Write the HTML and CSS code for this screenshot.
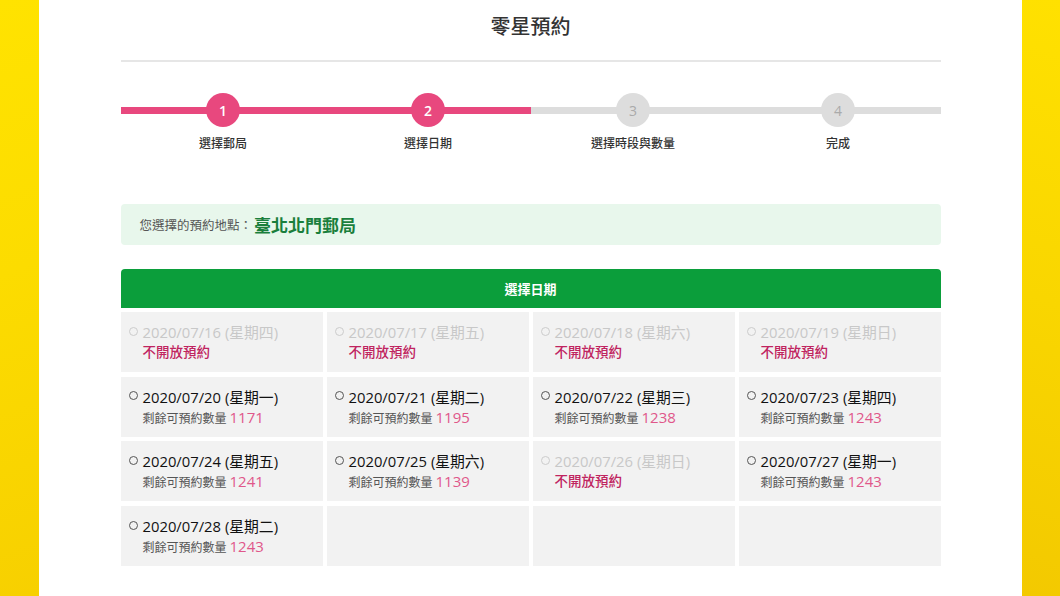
FILE: index.html
```html
<!DOCTYPE html>
<html lang="zh-Hant">
<head>
<meta charset="utf-8">
<link rel="stylesheet" href="styles.css">
</head>
<body>
<div class="page">
  <div class="side side-left"></div>
  <main class="main">
    <div class="container">
      <h1 class="title">零星預約</h1>
      <div class="steps">
        <div class="step done"><div class="track"><span class="dot">1</span></div><div class="label">選擇郵局</div></div>
        <div class="step done half"><div class="track"><span class="dot">2</span></div><div class="label">選擇日期</div></div>
        <div class="step"><div class="track"><span class="dot">3</span></div><div class="label">選擇時段與數量</div></div>
        <div class="step"><div class="track"><span class="dot">4</span></div><div class="label">完成</div></div>
      </div>
      <div class="location"><span class="loc-label">您選擇的預約地點：</span><span class="loc-name">臺北北門郵局</span></div>
      <div class="panel-head">選擇日期</div>
      <div class="grid">
        <div class="cell off"><div class="date"><span class="radio"></span>2020/07/16 (星期四)</div><div class="closed">不開放預約</div></div>
        <div class="cell off"><div class="date"><span class="radio"></span>2020/07/17 (星期五)</div><div class="closed">不開放預約</div></div>
        <div class="cell off"><div class="date"><span class="radio"></span>2020/07/18 (星期六)</div><div class="closed">不開放預約</div></div>
        <div class="cell off"><div class="date"><span class="radio"></span>2020/07/19 (星期日)</div><div class="closed">不開放預約</div></div>
        <div class="cell"><div class="date"><span class="radio"></span>2020/07/20 (星期一)</div><div class="left">剩餘可預約數量<span class="num">1171</span></div></div>
        <div class="cell"><div class="date"><span class="radio"></span>2020/07/21 (星期二)</div><div class="left">剩餘可預約數量<span class="num">1195</span></div></div>
        <div class="cell"><div class="date"><span class="radio"></span>2020/07/22 (星期三)</div><div class="left">剩餘可預約數量<span class="num">1238</span></div></div>
        <div class="cell"><div class="date"><span class="radio"></span>2020/07/23 (星期四)</div><div class="left">剩餘可預約數量<span class="num">1243</span></div></div>
        <div class="cell"><div class="date"><span class="radio"></span>2020/07/24 (星期五)</div><div class="left">剩餘可預約數量<span class="num">1241</span></div></div>
        <div class="cell"><div class="date"><span class="radio"></span>2020/07/25 (星期六)</div><div class="left">剩餘可預約數量<span class="num">1139</span></div></div>
        <div class="cell off"><div class="date"><span class="radio"></span>2020/07/26 (星期日)</div><div class="closed">不開放預約</div></div>
        <div class="cell"><div class="date"><span class="radio"></span>2020/07/27 (星期一)</div><div class="left">剩餘可預約數量<span class="num">1243</span></div></div>
        <div class="cell"><div class="date"><span class="radio"></span>2020/07/28 (星期二)</div><div class="left">剩餘可預約數量<span class="num">1243</span></div></div>
        <div class="cell"></div>
        <div class="cell"></div>
        <div class="cell"></div>
      </div>
    </div>
  </main>
  <div class="side side-right"></div>
</div>
</body>
</html>
```
FILE: styles.css
```css
* { box-sizing: border-box; }
html, body { margin: 0; padding: 0; }
body {
  font-family: "Open Sans", "Noto Sans CJK TC", sans-serif;
  background: #fff;
  color: #222;
}
.page {
  display: flex;
  width: 1060px;
  height: 596px;
  overflow: hidden;
}
.side {
  background: linear-gradient(160deg, #ffe300 0%, #fcdc00 45%, #f7d000 100%);
}
.side-left { width: 39px; }
.side-right { width: 38px; background: linear-gradient(200deg, #ffe100 0%, #f9d600 50%, #f3c900 100%); }
.main {
  flex: 1;
  background: #fff;
  display: flex;
  justify-content: center;
}
.container {
  width: 820px;
}
.title {
  margin: 0;
  height: 62px;
  border-bottom: 2px solid #e6e6e6;
  font-family: "Noto Sans CJK TC", sans-serif;
  font-size: 20px;
  font-weight: 500;
  color: #333;
  text-align: center;
  line-height: 52px;
}
.steps {
  display: flex;
  margin-top: 31px;
}
.step {
  flex: 1;
  display: flex;
  flex-direction: column;
  align-items: center;
}
.track {
  width: 100%;
  height: 34px;
  display: flex;
  align-items: center;
  justify-content: center;
  background: linear-gradient(#ddd, #ddd) center / 100% 7px no-repeat;
}
.step.done .track {
  background: linear-gradient(#e8487e, #e8487e) center / 100% 7px no-repeat;
}
.dot {
  width: 34px;
  height: 34px;
  border-radius: 50%;
  background: #ddd;
  color: #aaa;
  font-size: 14px;
  display: flex;
  align-items: center;
  justify-content: center;
}
.step.done .dot {
  background: #e8487e;
  color: #fff;
  font-weight: 600;
}
.label {
  margin-top: 8px;
  font-family: "Noto Sans CJK TC", sans-serif;
  font-size: 12px;
  font-weight: 500;
  color: #333;
  line-height: 16px;
}
.location {
  margin-top: 53px;
  height: 41px;
  background: #e8f7ec;
  border-radius: 4px;
  padding-left: 19px;
  display: flex;
  align-items: center;
  font-family: "Noto Sans CJK TC", sans-serif;
}
.loc-label {
  font-size: 12.5px;
  color: #555;
}
.loc-name {
  font-size: 17px;
  font-weight: 700;
  color: #1a7f3c;
  margin-left: 2px;
}
.panel-head {
  margin-top: 24px;
  height: 39px;
  background: #0b9e3b;
  border-radius: 4px 4px 0 0;
  color: #fff;
  font-family: "Noto Sans CJK TC", sans-serif;
  font-weight: 700;
  font-size: 13px;
  display: flex;
  align-items: center;
  justify-content: center;
}
.grid {
  margin-top: 4px;
  display: grid;
  grid-template-columns: repeat(4, 1fr);
  grid-auto-rows: 60px;
  gap: 4.7px 4px;
}
.cell {
  background: #f2f2f2;
  padding: 10px 0 0 8px;
}
.date {
  display: flex;
  align-items: center;
  font-size: 14.8px;
  color: #111;
  line-height: 20px;
}
.radio {
  width: 9px;
  height: 9px;
  border: 1px solid #555;
  border-radius: 50%;
  margin-right: 5px;
  margin-top: -2px;
  flex: none;
}
.off .date { color: #c8c8c8; }
.off .radio { border-color: #ccc; }
.closed {
  padding-left: 14px;
  font-family: "Noto Sans CJK TC", sans-serif;
  font-size: 13.5px;
  font-weight: 500;
  color: #c0245f;
  line-height: 18px;
}
.left {
  padding-left: 14px;
  font-family: "Noto Sans CJK TC", sans-serif;
  font-size: 12px;
  color: #555;
  line-height: 20px;
}
.num {
  font-family: "Open Sans", sans-serif;
  font-size: 15px;
  color: #e0578a;
  margin-left: 3px;
}
```
